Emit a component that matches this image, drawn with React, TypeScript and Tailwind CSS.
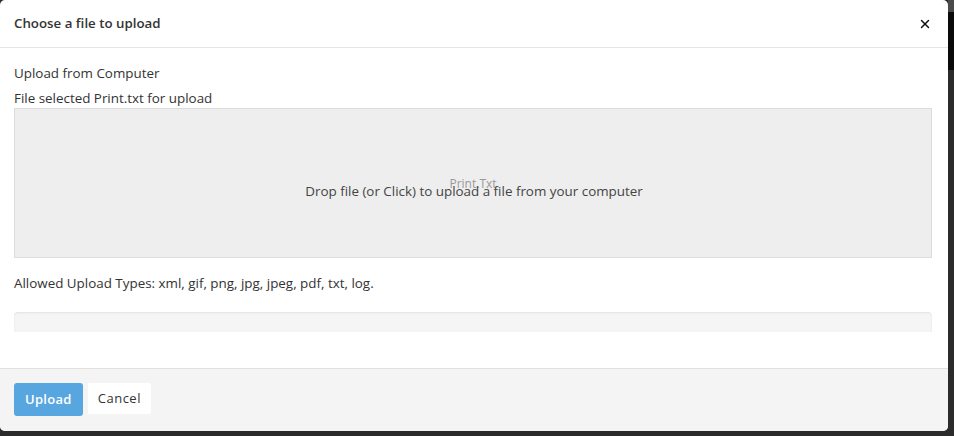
import { X } from "lucide-react";

const ALLOWED = ["xml", "gif", "png", "jpg", "jpeg", "pdf", "txt", "log"];

export default function App() {
  return (
    <div className="flex h-[436px] w-[954px] bg-[#2b2b2b] font-['Open_Sans',sans-serif] text-[13.4px] text-[#333]">
      <div className="flex h-[431px] w-[948px] flex-col rounded-[5px] bg-white">
        <div className="flex h-[48px] items-center justify-between border-b border-[#e5e5e5] pl-[14px] pr-[16px]">
          <h4 className="text-[13.3px] font-semibold text-[#333]">Choose a file to upload</h4>
          <button className="text-[#111]">
            <X size={14} strokeWidth={2.5} />
          </button>
        </div>

        <div className="flex flex-1 flex-col pl-[14px] pr-[16px] pt-[16px]">
          <p className="leading-[18px]">Upload from Computer</p>
          <p className="mt-[7px] leading-[18px]">File selected Print.txt for upload</p>

          <div className="relative mt-[1px] flex h-[150px] items-center justify-center border border-[#dcdcdc] bg-[#eeeeee] text-[#444]">
            <span className="absolute left-0 right-0 top-[66px] text-center text-[12px] text-[#999]">Print.Txt</span>
            <span className="relative left-[1px] top-[8px]">Drop file (or Click) to upload a file from your computer</span>
          </div>

          <p className="mt-[16px] leading-[18px]">Allowed Upload Types: {ALLOWED.join(", ")}.</p>

          <div className="mt-[20px] h-[20px] rounded-t-[4px] bg-[#f5f5f5] shadow-[inset_0_1px_2px_rgba(0,0,0,0.08)]" />
        </div>

        <div className="flex h-[63px] items-start gap-[5px] rounded-b-[5px] border-t border-[#e0e0e0] bg-[#f4f4f4] px-[14px] pt-[14px] text-[13px]">
          <button className="h-[33px] rounded-[3px] bg-[#57a6e0] px-[11px] font-semibold tracking-[0.3px] text-white">Upload</button>
          <button className="h-[31px] rounded-[2px] bg-white px-[10px] tracking-[0.5px] text-[#333]">Cancel</button>
        </div>
      </div>
      <div className="flex flex-1 flex-col">
        <div className="h-[12px] bg-[#4a4a4a]" />
        <div className="h-[58px] bg-[#0a0a0a]" />
      </div>
    </div>
  );
}
